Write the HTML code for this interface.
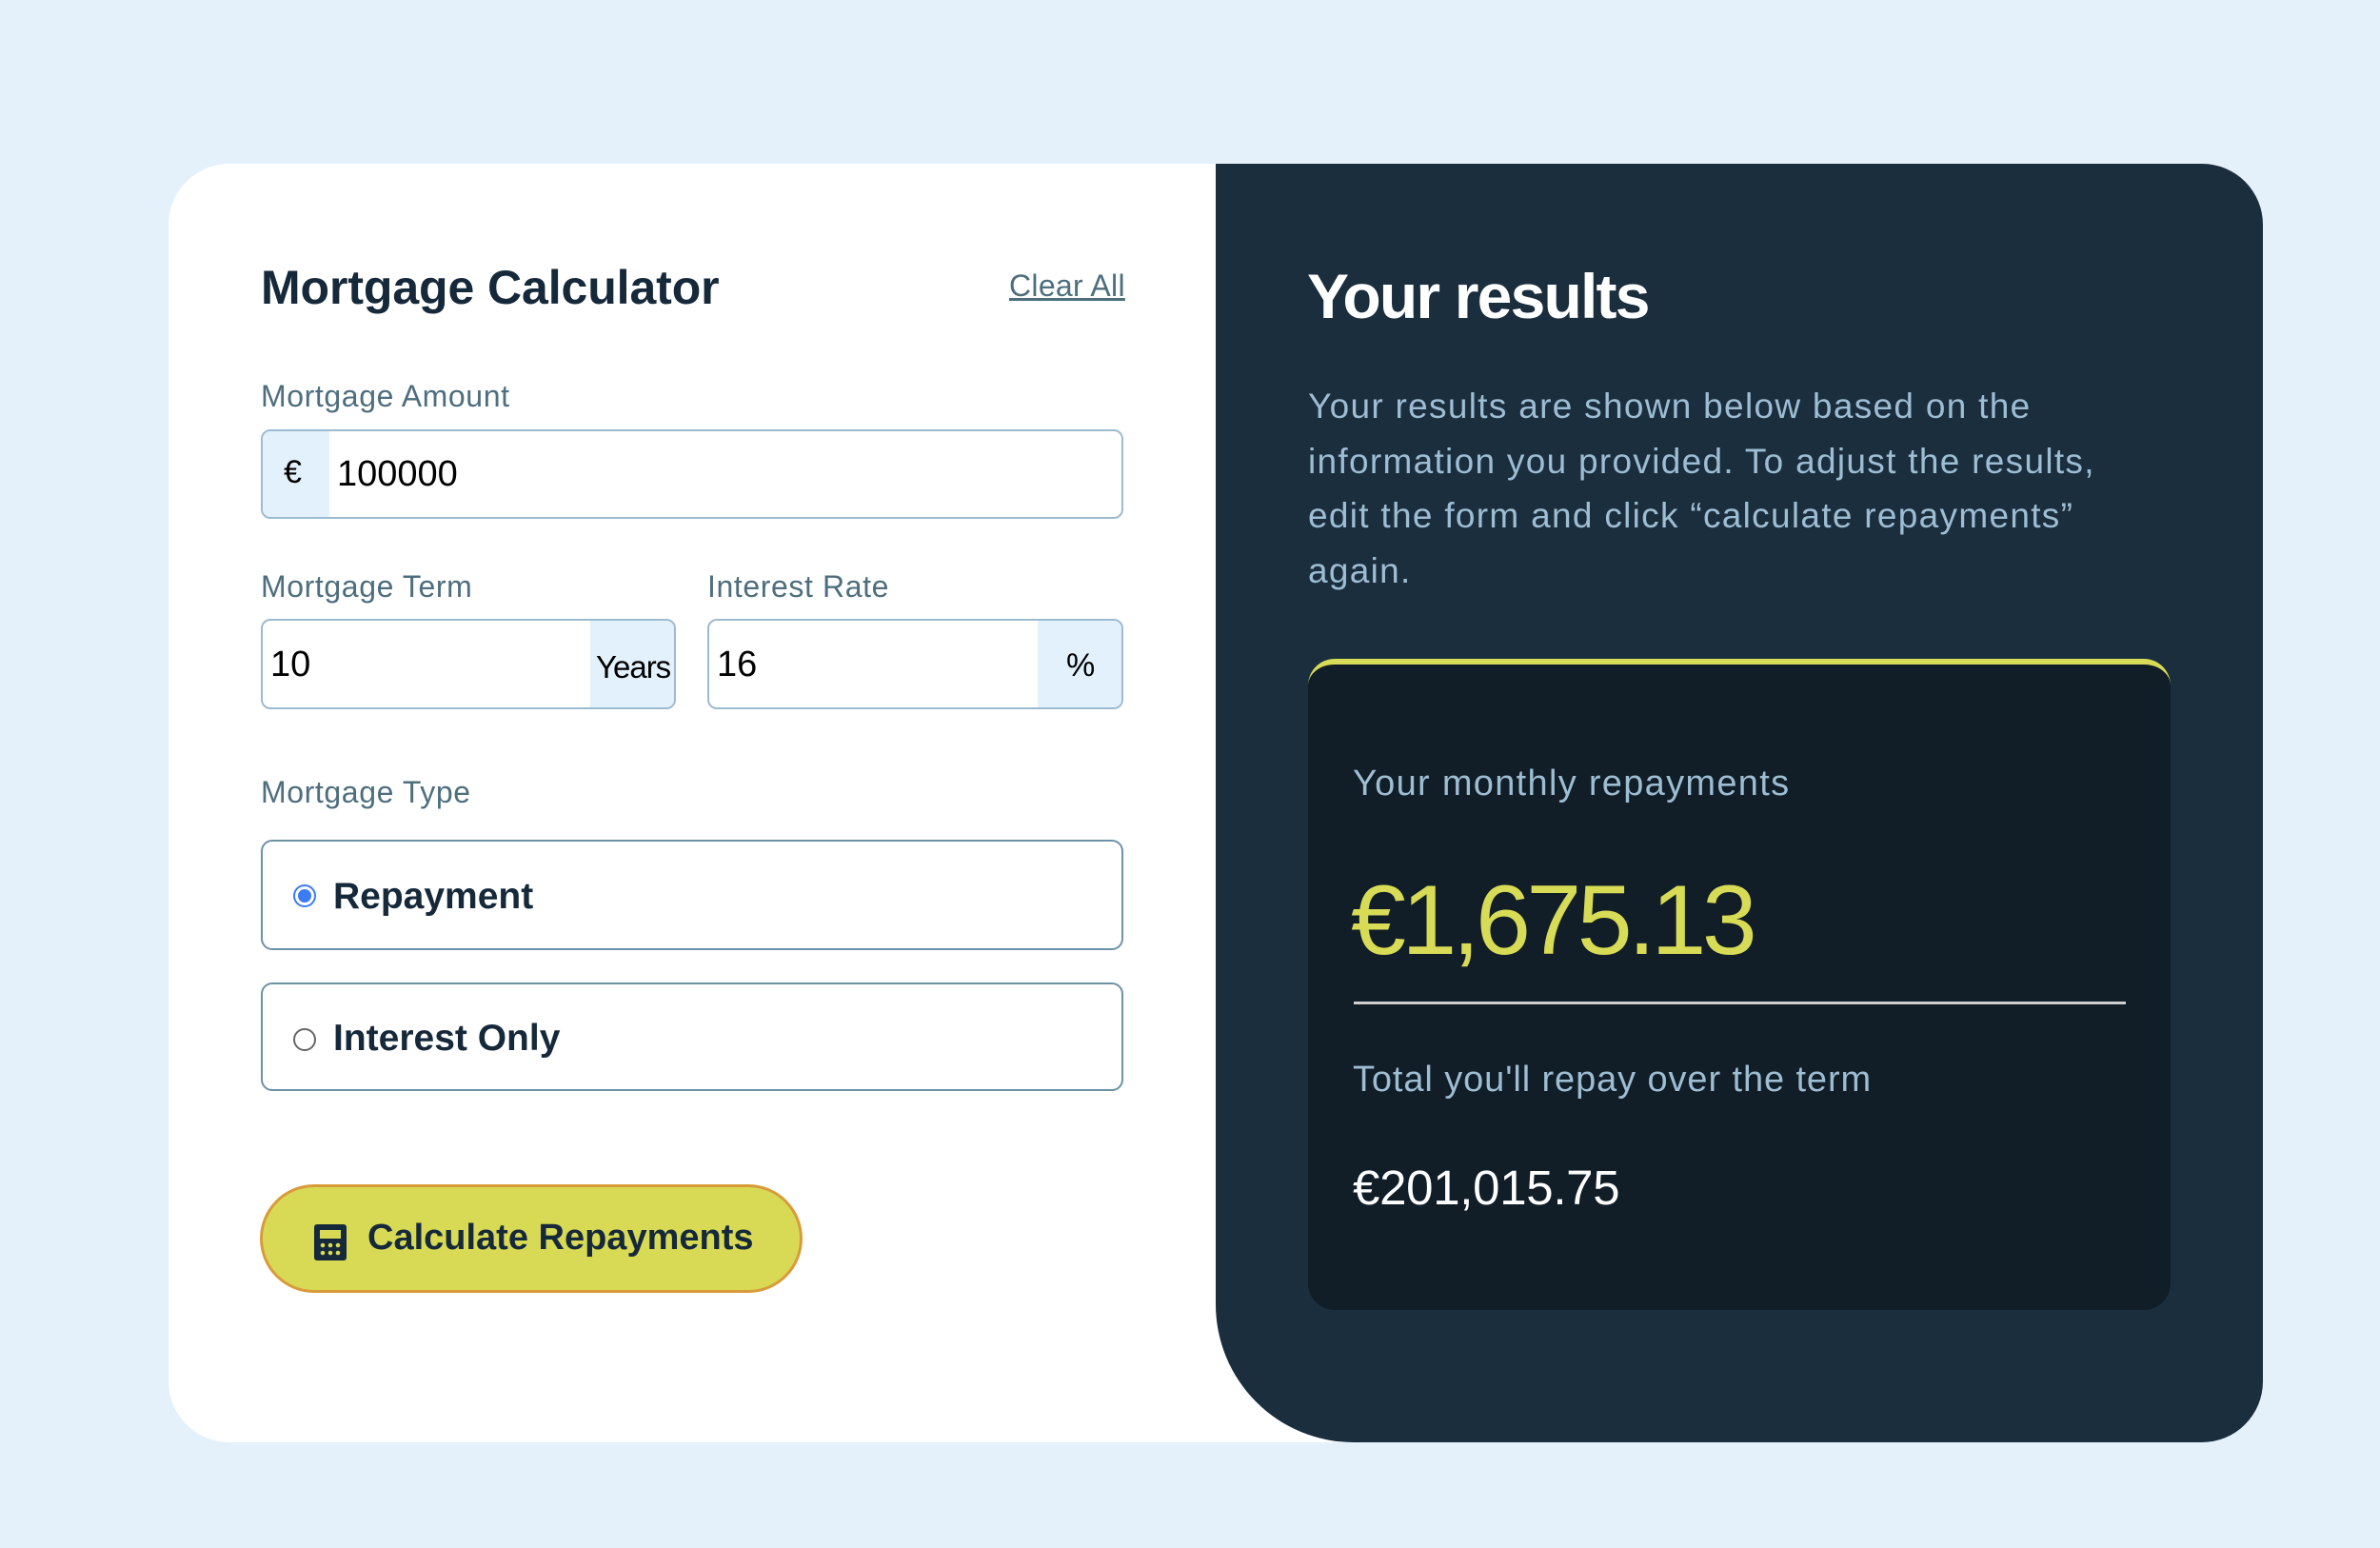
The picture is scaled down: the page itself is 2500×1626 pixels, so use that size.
<!DOCTYPE html>
<html><head><meta charset="utf-8"><style>
*{margin:0;padding:0;box-sizing:border-box}
body{width:2500px;height:1626px;background:#e4f1fb;font-family:"Liberation Sans",sans-serif;position:relative;overflow:hidden}
.a{position:absolute;white-space:nowrap}
.card{position:absolute;left:177px;top:172px;width:2200px;height:1343px;background:#fff;border-radius:64px}
.right{position:absolute;left:1277px;top:172px;width:1100px;height:1343px;background:#1b2e3e;border-radius:0 64px 64px 145px}
.lbl{color:#4e6e7e;font-size:32px;letter-spacing:0.6px}
.box{position:absolute;border:2px solid #9dbbd0;border-radius:10px;background:#fff;overflow:hidden}
.pre{position:absolute;top:0;bottom:0;background:#e3f1fc}
.val{position:absolute;font-size:38px;color:#000}
.rad{position:absolute;border:2px solid #6d92a6;border-radius:12px;background:#fff}
.rt{font-weight:bold;font-size:39px;color:#16293a;letter-spacing:0px}
</style></head><body>
<div class="card"></div>
<div class="right"></div>

<div class="a" style="left:274px;top:273px;font-size:50px;font-weight:bold;color:#16293a;letter-spacing:-0.1px">Mortgage Calculator</div>
<div class="a" style="left:1060px;top:282px;font-size:32px;color:#4e6e7e;text-decoration:underline;letter-spacing:0.3px">Clear All</div>

<div class="a lbl" style="left:274px;top:398px">Mortgage Amount</div>
<div class="box" style="left:274px;top:451px;width:906px;height:94px">
  <div class="pre" style="left:0;width:70px"></div>
  <div class="val" style="left:22px;top:24px;font-size:34px">€</div>
  <div class="val" style="left:78px;top:24px">100000</div>
</div>

<div class="a lbl" style="left:274px;top:598px">Mortgage Term</div>
<div class="a lbl" style="left:743px;top:598px">Interest Rate</div>
<div class="box" style="left:274px;top:650px;width:436px;height:95px">
  <div class="pre" style="right:0;width:88px"></div>
  <div class="val" style="left:8px;top:25px">10</div>
  <div class="val" style="left:350px;top:30px;font-size:33px;letter-spacing:-1px">Years</div>
</div>
<div class="box" style="left:743px;top:650px;width:437px;height:95px">
  <div class="pre" style="right:0;width:88px"></div>
  <div class="val" style="left:8px;top:25px">16</div>
  <div class="val" style="left:375px;top:28px;font-size:34px">%</div>
</div>

<div class="a lbl" style="left:274px;top:814px">Mortgage Type</div>
<div class="rad" style="left:274px;top:882px;width:906px;height:116px">
  <div class="a" style="left:32px;top:45px;width:24px;height:24px;border-radius:50%;border:2px solid #3b7cf5;background:#fff"><div style="position:absolute;left:3px;top:3px;width:14px;height:14px;border-radius:50%;background:#3b7cf5"></div></div>
  <div class="a rt" style="left:74px;top:36px">Repayment</div>
</div>
<div class="rad" style="left:274px;top:1032px;width:906px;height:114px">
  <div class="a" style="left:32px;top:46px;width:24px;height:24px;border-radius:50%;border:2px solid #666;background:#fff"></div>
  <div class="a rt" style="left:74px;top:35px">Interest Only</div>
</div>

<div class="a" style="left:273px;top:1244px;width:570px;height:114px;border:3px solid #d99b3a;border-radius:57px;background:#d8da55">
  <svg class="a" style="left:53px;top:38px" width="36" height="40" viewBox="0 0 36 40"><rect x="1" y="1" width="34" height="38" rx="3" fill="#16293a"/><rect x="7" y="7" width="22" height="9" fill="#d8da55"/><g fill="#d8da55"><circle cx="10" cy="23" r="2.3"/><circle cx="18" cy="23" r="2.3"/><circle cx="26" cy="23" r="2.3"/><circle cx="10" cy="31" r="2.3"/><circle cx="18" cy="31" r="2.3"/><circle cx="26" cy="31" r="2.3"/></g></svg>
  <div class="a" style="left:110px;top:32px;font-size:38px;font-weight:bold;color:#16293a">Calculate Repayments</div>
</div>

<div class="a" style="left:1373px;top:273px;font-size:66px;font-weight:bold;color:#fff;letter-spacing:-1.8px">Your results</div>
<div class="a" style="left:1374px;top:398px;font-size:37px;line-height:57.5px;color:#9dbdd3;letter-spacing:1.3px">Your results are shown below based on the<br>information you provided. To adjust the results,<br>edit the form and click “calculate repayments”<br>again.</div>

<div class="a" style="left:1374px;top:692px;width:906px;height:684px;background:#111d27;border-radius:28px;border-top:6px solid #d8db55"></div>
<div class="a" style="left:1421px;top:802px;font-size:38px;color:#9dbdd3;letter-spacing:1.3px">Your monthly repayments</div>
<div class="a" style="left:1419px;top:908px;font-size:104px;color:#d8db55;letter-spacing:-4.5px">€1,675.13</div>
<div class="a" style="left:1422px;top:1052px;width:811px;height:3px;background:#d0d0d0"></div>
<div class="a" style="left:1421px;top:1113px;font-size:38px;color:#9dbdd3;letter-spacing:0.9px">Total you'll repay over the term</div>
<div class="a" style="left:1421px;top:1218px;font-size:51px;color:#fff;letter-spacing:-0.3px">€201,015.75</div>
</body></html>
